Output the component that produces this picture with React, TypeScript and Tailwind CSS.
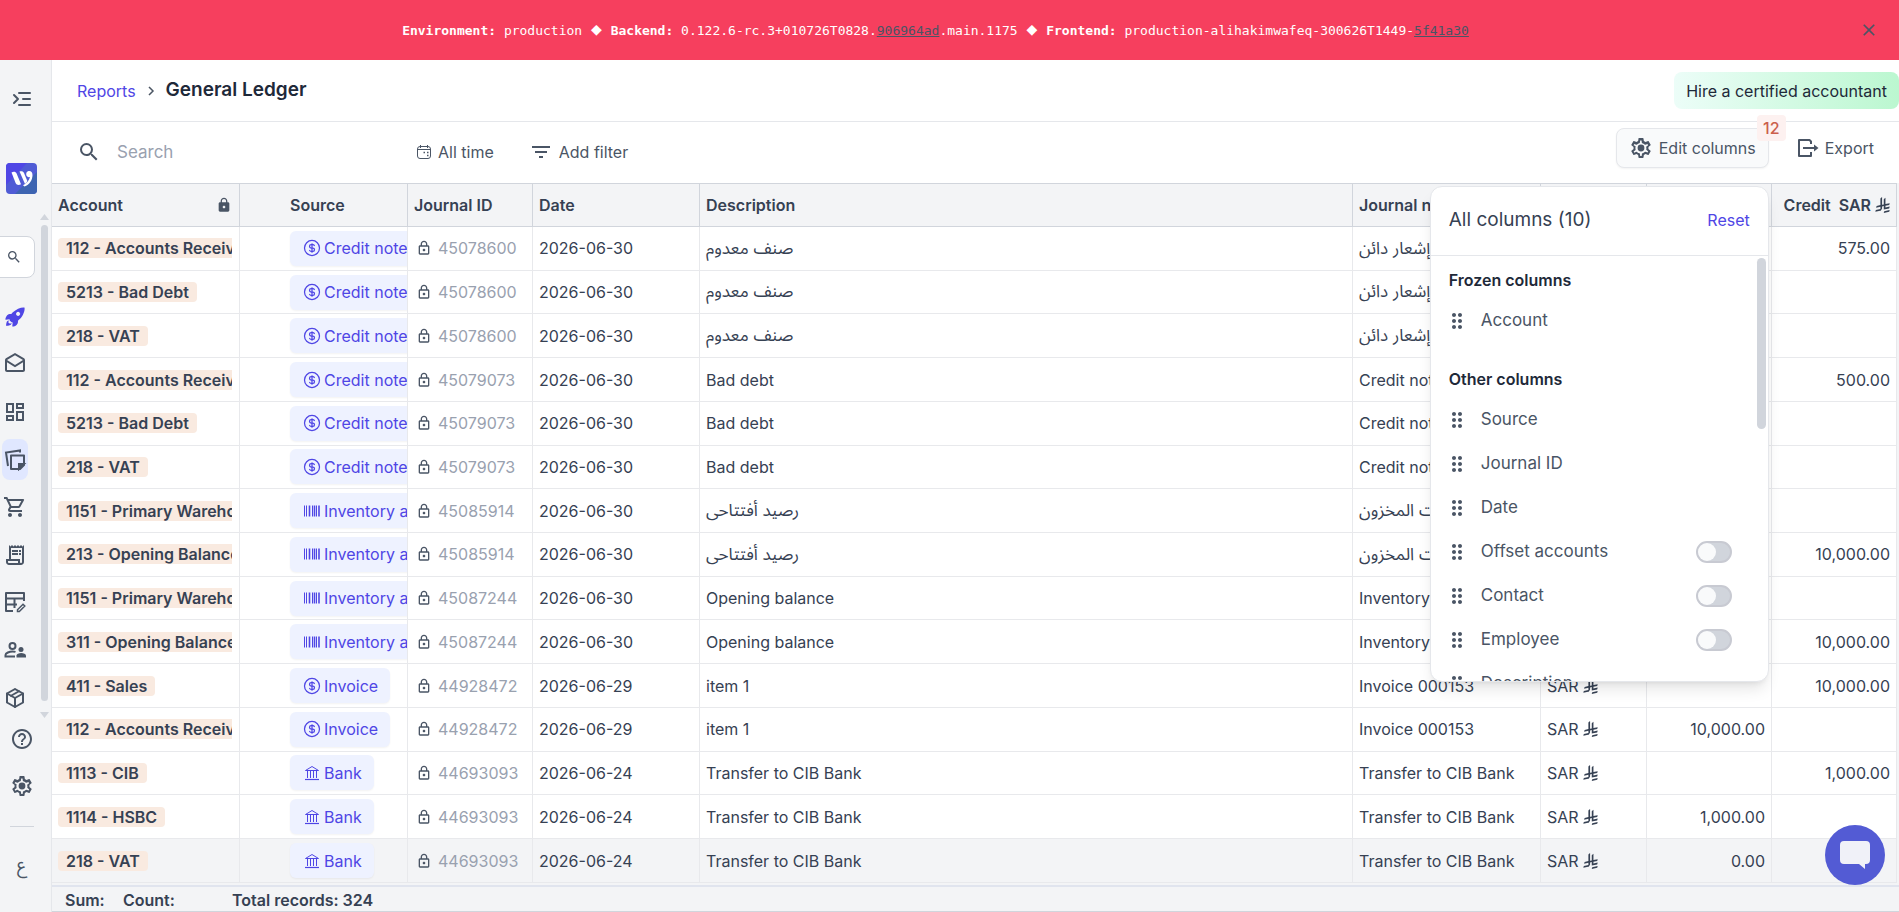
import React from 'react'
import {
  MdClose,
  MdDragIndicator,
  MdFilterList,
  MdHelpOutline,
  MdLock,
  MdOutlineDashboard,
  MdOutlineDrafts,
  MdOutlineLock,
  MdOutlineReceiptLong,
  MdOutlineShoppingCart,
  MdSearch,
} from 'react-icons/md'
import { IoRocketSharp } from 'react-icons/io5'
import { TbCoin, TbIndentIncrease, TbPackage } from 'react-icons/tb'

type SourceType = 'Credit note' | 'Inventory adjustment' | 'Invoice' | 'Bank'

interface Entry {
  account: string
  source: SourceType
  journalId: string
  date: string
  description: string
  note: string
  debit: string
  credit: string
}

const entries: Entry[] = [
  { account: '112 - Accounts Receivable', source: 'Credit note', journalId: '45078600', date: '2026-06-30', description: 'صنف معدوم', note: 'إشعار دائن', debit: '', credit: '575.00' },
  { account: '5213 - Bad Debt', source: 'Credit note', journalId: '45078600', date: '2026-06-30', description: 'صنف معدوم', note: 'إشعار دائن', debit: '500.00', credit: '' },
  { account: '218 - VAT', source: 'Credit note', journalId: '45078600', date: '2026-06-30', description: 'صنف معدوم', note: 'إشعار دائن', debit: '75.00', credit: '' },
  { account: '112 - Accounts Receivable', source: 'Credit note', journalId: '45079073', date: '2026-06-30', description: 'Bad debt', note: 'Credit note', debit: '', credit: '500.00' },
  { account: '5213 - Bad Debt', source: 'Credit note', journalId: '45079073', date: '2026-06-30', description: 'Bad debt', note: 'Credit note', debit: '500.00', credit: '' },
  { account: '218 - VAT', source: 'Credit note', journalId: '45079073', date: '2026-06-30', description: 'Bad debt', note: 'Credit note', debit: '0.00', credit: '' },
  { account: '1151 - Primary Warehouse', source: 'Inventory adjustment', journalId: '45085914', date: '2026-06-30', description: 'رصيد أفتتاحى', note: 'تعديلات المخزون', debit: '10,000.00', credit: '' },
  { account: '213 - Opening Balance', source: 'Inventory adjustment', journalId: '45085914', date: '2026-06-30', description: 'رصيد أفتتاحى', note: 'تعديلات المخزون', debit: '', credit: '10,000.00' },
  { account: '1151 - Primary Warehouse', source: 'Inventory adjustment', journalId: '45087244', date: '2026-06-30', description: 'Opening balance', note: 'Inventory', debit: '10,000.00', credit: '' },
  { account: '311 - Opening Balance', source: 'Inventory adjustment', journalId: '45087244', date: '2026-06-30', description: 'Opening balance', note: 'Inventory', debit: '', credit: '10,000.00' },
  { account: '411 - Sales', source: 'Invoice', journalId: '44928472', date: '2026-06-29', description: 'item 1', note: 'Invoice 000153', debit: '', credit: '10,000.00' },
  { account: '112 - Accounts Receivable', source: 'Invoice', journalId: '44928472', date: '2026-06-29', description: 'item 1', note: 'Invoice 000153', debit: '10,000.00', credit: '' },
  { account: '1113 - CIB', source: 'Bank', journalId: '44693093', date: '2026-06-24', description: 'Transfer to CIB Bank', note: 'Transfer to CIB Bank', debit: '', credit: '1,000.00' },
  { account: '1114 - HSBC', source: 'Bank', journalId: '44693093', date: '2026-06-24', description: 'Transfer to CIB Bank', note: 'Transfer to CIB Bank', debit: '1,000.00', credit: '' },
  { account: '218 - VAT', source: 'Bank', journalId: '44693093', date: '2026-06-24', description: 'Transfer to CIB Bank', note: 'Transfer to CIB Bank', debit: '0.00', credit: '' },
]

const otherColumns = [
  { name: 'Source', toggle: false },
  { name: 'Journal ID', toggle: false },
  { name: 'Date', toggle: false },
  { name: 'Offset accounts', toggle: true },
  { name: 'Contact', toggle: true },
  { name: 'Employee', toggle: true },
  { name: 'Description', toggle: false },
]

const Riyal = () => (
  <svg viewBox="0 0 1124 1257" className="inline-block h-4 w-[15px]" fill="currentColor" aria-hidden="true">
    <path d="M699.62 1113.02c-20.06 44.48-33.32 92.75-38.4 143.37l424.51-90.24c20.06-44.47 33.31-92.75 38.4-143.37l-424.51 90.24Z" />
    <path d="M1085.73 895.8c20.06-44.47 33.32-92.75 38.4-143.37l-330.68 70.33v-135.2l292.27-62.11c20.06-44.47 33.32-92.75 38.4-143.37l-330.68 70.27V66.13c-50.67 28.45-95.67 66.32-132.25 110.99v403.35l-132.25 28.11V0c-50.67 28.44-95.67 66.32-132.25 110.99v525.69l-295.91 62.88c-20.06 44.47-33.33 92.75-38.42 143.37l334.33-71.05v170.26l-358.3 76.14c-20.06 44.47-33.32 92.75-38.4 143.37l375.04-79.7c30.53-6.35 56.77-24.4 73.83-49.24l68.78-101.97c7.14-10.55 11.3-23.27 11.3-36.97v-149.98l132.25-28.11v270.4l424.53-90.28Z" />
  </svg>
)

const GearIcon = () => (
  <svg viewBox="0 0 24 24" className="size-6" fill="currentColor" aria-hidden="true">
    <path d="M19.43 12.98c.04-.32.07-.64.07-.98s-.03-.66-.07-.98l2.11-1.65c.19-.15.24-.42.12-.64l-2-3.46c-.12-.22-.39-.3-.61-.22l-2.49 1c-.52-.4-1.08-.73-1.69-.98l-.38-2.65A.49.49 0 0 0 14 2h-4c-.25 0-.46.18-.49.42l-.38 2.65c-.61.25-1.17.59-1.69.98l-2.49-1c-.23-.09-.49 0-.61.22l-2 3.46c-.13.22-.07.49.12.64l2.11 1.65c-.04.32-.07.65-.07.98s.03.66.07.98l-2.11 1.65c-.19.15-.24.42-.12.64l2 3.46c.12.22.39.3.61.22l2.49-1c.52.4 1.08.73 1.69.98l.38 2.65c.03.24.24.42.49.42h4c.25 0 .46-.18.49-.42l.38-2.65c.61-.25 1.17-.59 1.69-.98l2.49 1c.23.09.49 0 .61-.22l2-3.46c.12-.22.07-.49-.12-.64l-2.11-1.65Zm-2-.98c0 .22-.02.45-.05.74l-.14 1.13.89.7 1.08.84-.7 1.21-1.27-.51-1.04-.42-.9.68c-.43.32-.84.56-1.25.73l-1.06.43-.16 1.13-.2 1.35h-1.4l-.35-2.48-1.06-.43c-.43-.18-.83-.41-1.23-.71l-.91-.7-1.06.43-1.27.51-.7-1.21 1.97-1.54-.14-1.13c-.03-.3-.05-.54-.05-.75s.02-.45.05-.74l.14-1.13L4.57 9.14l.7-1.21 1.27.51 1.04.42.9-.68c.43-.32.84-.56 1.25-.73l1.06-.43.16-1.13.2-1.35h1.39l.35 2.48 1.06.43c.43.18.83.41 1.23.71l.91.7 1.06-.43 1.27-.51.7 1.21-1.96 1.55.14 1.13c.03.3.05.52.05.73Z" />
    <circle cx="12" cy="12" r="3.4" />
  </svg>
)

const NotesIcon = () => (
  <svg viewBox="0 0 24 24" className="size-6" fill="none" stroke="currentColor" strokeWidth="2" aria-hidden="true">
    <path d="M8 8.5h13V18l-4 4H8z" strokeLinejoin="round" />
    <path d="M21 17h-5v5z" fill="currentColor" />
    <path d="M5 19 3 5.500 17 3.500v2" />
  </svg>
)

const TableEditIcon = () => (
  <svg viewBox="0 0 24 24" className="size-6" fill="none" stroke="currentColor" strokeWidth="2" aria-hidden="true">
    <path d="M10 21H3V3h18v8" strokeLinejoin="round" />
    <path d="M3 8.500h18M3 14.500h11M11.500 8.500V18" />
    <path d="M14.500 21.500v-1.800l5.500-5.500 1.800 1.800-5.500 5.500z" strokeWidth="1.500" />
  </svg>
)

const PeopleIcon = () => (
  <svg viewBox="0 0 24 24" className="size-6" fill="none" stroke="currentColor" strokeWidth="2" aria-hidden="true">
    <circle cx="9.500" cy="8" r="3" />
    <path d="M12 18.500H2.500v-1.500c0-2 4-3.500 7-3.500 1 0 2 .1 3 .4" />
    <circle cx="18" cy="11.500" r="2.500" fill="currentColor" stroke="none" />
    <path d="M13.500 19.500v-2c0-1.500 2.500-2.500 4.700-2.500s4.800 1 4.800 2.500v2z" fill="currentColor" stroke="none" />
  </svg>
)

const CalendarIcon = () => (
  <svg viewBox="0 0 16 16" className="size-4" fill="none" stroke="currentColor" aria-hidden="true">
    <rect x="1.500" y="2.500" width="13" height="12" rx="2.500" />
    <path d="M1.500 5.500h13M4.500 1v3M11.500 1v3" />
    <path d="M7.500 8.500h1.500M11 8.500h1.500M11 11.500h1.500" strokeWidth="1.500" />
  </svg>
)

const ExportIcon = () => (
  <svg viewBox="0 0 22 20" className="h-5 w-[22px]" fill="none" stroke="currentColor" strokeWidth="2" aria-hidden="true">
    <path d="M14 6V3.500L12.500 2H2v16h12v-4" strokeLinejoin="round" />
    <path d="M6 10h13" />
    <path d="m17 6.500 4.500 3.500-4.500 3.500z" fill="currentColor" stroke="none" />
  </svg>
)

const BankIcon = () => (
  <svg viewBox="0 0 16 16" className="size-4" fill="none" stroke="currentColor" aria-hidden="true">
    <path d="M1.500 5.500h13L8 1.500z" strokeLinejoin="round" />
    <path d="M3.500 6v7M6.500 6v7M9.500 6v7M12.500 6v7" />
    <path d="M1 14.500h14" strokeWidth="1.200" />
  </svg>
)

const BarcodeIcon = () => (
  <svg viewBox="0 0 16 16" className="size-4 shrink-0" fill="none" stroke="currentColor" aria-hidden="true">
    <path d="M.5 2.500v11M2.500 2.500v11M8.500 2.500v11M12.500 2.500v11" />
    <path d="M5.500 2.500v11M10.500 2.500v11M15 2.500v11" strokeWidth="1.600" />
  </svg>
)

const Logo = () => (
  <svg viewBox="0 0 31 31" className="size-[31px]" aria-hidden="true">
    <rect width="31" height="31" rx="4" fill="#4f5bd5" />
    <path d="M0 4a4 4 0 0 1 4-4h17L0 22z" fill="#4f46e5" />
    <path d="M31 9v18a4 4 0 0 1-4 4H9z" fill="#3d64b1" />
    <g fill="#fff">
      <path d="M5.500 9.500c2-1.300 4.200-1 5.200 1.200l4.300 10.500c-2.300 1.300-4.500.8-5.500-1.500z" />
      <path d="M13.500 8.500c2-.8 3.700-.3 4.500 1.500l3.300 8c-.6 1.300-1.300 2.200-2.300 3z" />
      <path d="M22.500 8c2.400-.4 4 1.200 4 4 0 5-3 9.800-8 11.500l-1.500-1.300c3.500-1.700 6.200-4.700 7-8.200-2 .6-3.800-.8-3.800-2.800 0-1.700 1-2.900 2.300-3.200z" />
    </g>
  </svg>
)

const SourceIcon: React.FC<{ source: SourceType }> = ({ source }) => {
  if (source === 'Bank') return <BankIcon />
  if (source === 'Inventory adjustment') return <BarcodeIcon />
  return <TbCoin className="-mx-[2px] size-5 shrink-0" strokeWidth={1.5} />
}

const navItems = [
  { label: 'Get started', icon: <IoRocketSharp className="size-[22px] text-[#4f46e5]" /> },
  { label: 'Inbox', icon: <MdOutlineDrafts className="size-6" /> },
  { label: 'Dashboard', icon: <MdOutlineDashboard className="size-6" /> },
  { label: 'Reports', icon: <NotesIcon /> },
  { label: 'Sales', icon: <MdOutlineShoppingCart className="size-6" /> },
  { label: 'Bills', icon: <MdOutlineReceiptLong className="size-6" /> },
  { label: 'Accounting', icon: <TableEditIcon /> },
  { label: 'Payroll', icon: <PeopleIcon /> },
  { label: 'Inventory', icon: <TbPackage className="size-6" /> },
]

const Banner = () => (
  <div className="flex h-[60px] shrink-0 items-center bg-[#f63f5e] pl-8 text-white">
    <p className="flex-1 pt-[2px] text-center font-['DejaVu_Sans_Mono',monospace] text-[13px]">
      <b>Environment:</b> production <span className="mx-px text-lg leading-4">◆</span> <b>Backend:</b> 0.122.6-rc.3+010726T0828.
      <a href="#backend" className="text-gray-600 underline">906964ad</a>.main.1175{' '}
      <span className="mx-px text-lg leading-4">◆</span> <b>Frontend:</b> production-alihakimwafeq-300626T1449-
      <a href="#frontend" className="text-gray-600 underline">5f41a30</a>
    </p>
    <button aria-label="Close" className="flex w-[60px] justify-center text-gray-600">
      <MdClose className="size-5" />
    </button>
  </div>
)

const Sidebar = () => (
  <aside className="flex w-[52px] shrink-0 flex-col border-r border-gray-200 bg-gray-100 text-gray-600">
    <button aria-label="Expand menu" className="mt-7 flex h-[22px] items-center justify-center pr-2">
      <TbIndentIncrease className="size-6" />
    </button>
    <div className="mt-[53px] pl-[6px]">
      <Logo />
    </div>
    <div className="mt-5 flex h-[504px] justify-between">
      <div className="flex flex-col">
        <button aria-label="Search" className="-ml-2 mt-[22px] flex h-[42px] w-[43px] items-center justify-center rounded-lg border border-gray-300 bg-white">
          <MdSearch className="size-4" />
        </button>
        <nav className="mt-[18px] flex flex-1 flex-col justify-between pl-[2px]">
          {navItems.map((item) => (
            <a
              key={item.label}
              href="#nav"
              aria-label={item.label}
              className={
                item.label === 'Reports'
                  ? 'flex h-[41px] w-[26px] items-center justify-center rounded-lg bg-indigo-100'
                  : 'flex h-[41px] w-[26px] items-center justify-center'
              }
            >
              {item.icon}
            </a>
          ))}
        </nav>
      </div>
      <div className="mr-[2px] flex w-[9px] flex-col items-center">
        <span className="h-[6px] w-[9px] bg-gray-300 [clip-path:polygon(50%_0,100%_100%,0_100%)]" />
        <span className="mt-[5px] mb-[11px] w-[7px] flex-1 rounded-full bg-gray-300" />
        <span className="h-[6px] w-[9px] bg-gray-300 [clip-path:polygon(0_0,100%_0,50%_100%)]" />
      </div>
    </div>
    <div className="flex flex-col items-center pr-2">
      <button aria-label="Help" className="mt-[9px]">
        <MdHelpOutline className="size-6" />
      </button>
      <button aria-label="Settings" className="mt-[23px]">
        <GearIcon />
      </button>
      <hr className="mt-7 w-6 border-gray-300" />
      <button className="mt-[26px] text-lg leading-6">ع</button>
    </div>
  </aside>
)

const ColumnRow: React.FC<{ name: string; toggle: boolean }> = ({ name, toggle }) => (
  <li className="flex h-11 items-center text-[17px] text-gray-600">
    <MdDragIndicator className="mr-2 -ml-1 size-6" />
    <label htmlFor={'col-' + name} className="flex-1 pl-1">
      {name}
    </label>
    {toggle && (
      <input
        id={'col-' + name}
        type="checkbox"
        role="switch"
        className="mr-[34px] h-[22px] w-9 appearance-none rounded-full border-2 border-[#c8cad2] bg-gray-300 before:block before:size-[18px] before:rounded-full before:bg-gray-50"
      />
    )}
  </li>
)

const ColumnsPanel = () => (
  <div className="absolute top-[58px] right-0 z-20 h-[496px] w-[339px] overflow-hidden rounded-xl border border-gray-200 bg-white text-left shadow-lg">
    <div className="flex h-[69px] items-center justify-between border-b border-gray-200 px-[18px] pb-[2px]">
      <h2 className="text-[19px] text-gray-700">All columns (10)</h2>
      <button className="text-[#4f46e5]">Reset</button>
    </div>
    <div className="flex">
      <div className="flex-1 pt-3 pl-[18px]">
        <h3 className="font-semibold text-gray-800">Frozen columns</h3>
        <ul className="pt-[7px]">
          <ColumnRow name="Account" toggle={false} />
        </ul>
        <h3 className="pt-6 font-semibold text-gray-800">Other columns</h3>
        <ul className="pt-[7px]">
          {otherColumns.map((c) => (
            <ColumnRow key={c.name} name={c.name} toggle={c.toggle} />
          ))}
        </ul>
      </div>
      <span className="mt-[2px] mr-[2px] -ml-[9px] h-[171px] w-[9px] rounded-full bg-gray-300" />
    </div>
  </div>
)

const Toolbar = () => (
  <div className="flex h-[61px] shrink-0 items-start text-gray-600">
    <label className="mt-[18px] flex h-6 w-[364px] items-center gap-4 pl-[25px]">
      <MdSearch className="size-6" />
      <input type="text" placeholder="Search" aria-label="Search" className="w-60 pt-px text-[17px] outline-none placeholder:text-gray-400" />
    </label>
    <button className="mt-[18px] flex items-center gap-[6px]">
      <CalendarIcon /> All time
    </button>
    <button className="mt-[18px] ml-[35px] flex items-center gap-[6px]">
      <MdFilterList className="size-6" /> Add filter
    </button>
    <div className="relative mt-[6px] ml-auto">
      <button className="flex h-10 items-center gap-[6px] rounded-lg border border-gray-200 bg-gray-50 px-3 shadow-xs">
        <GearIcon /> Edit columns
      </button>
      <span className="absolute -top-[13px] -right-[17px] flex h-[26px] w-[29px] items-center justify-center rounded bg-[#fdf1f0] font-medium text-[#cb5f4c]">12</span>
      <ColumnsPanel />
    </div>
    <button className="mt-[14px] mr-[25px] ml-7 flex items-center gap-[6px]">
      <ExportIcon /> Export
    </button>
  </div>
)

const th = 'overflow-hidden border-y border-r border-gray-300 px-[6px] text-left font-semibold whitespace-nowrap'
const td = 'overflow-hidden border-r border-b border-[#e8e9ec] px-[6px] py-0 whitespace-nowrap'

const isArabic = (text: string) => /[\u0600-\u06ff]/.test(text)

const LedgerTable = () => (
  <table className="h-full w-full table-fixed border-separate border-spacing-0 text-gray-700">
    <colgroup>
      <col className="w-[188px]" />
      <col className="w-[168px]" />
      <col className="w-[125px]" />
      <col className="w-[167px]" />
      <col />
      <col className="w-[188px]" />
      <col className="w-[106px]" />
      <col className="w-[125px]" />
      <col className="w-[125px]" />
    </colgroup>
    <thead className="bg-gray-100">
      <tr className="h-11">
        <th className={th}>
          <span className="flex items-center justify-between pr-px">
            Account <MdLock className="size-4 text-gray-600" />
          </span>
        </th>
        <th className={th}>
          <span className="pl-11">Source</span>
        </th>
        <th className={th}>Journal ID</th>
        <th className={th}>Date</th>
        <th className={th}>Description</th>
        <th className={th}>Journal note</th>
        <th className={th}>Currency</th>
        <th className={th}>Debit</th>
        <th className={th}>
          <span className="flex items-center justify-end gap-2">
            Credit{' '}
            <span className="flex items-center gap-1">
              SAR <Riyal />
            </span>
          </span>
        </th>
      </tr>
    </thead>
    <tbody>
      {entries.map((e, i) => (
        <tr key={i} className={i === entries.length - 1 ? 'bg-gray-100' : 'bg-white'}>
          <td className={td}>
            <div className="mr-px flex overflow-hidden">
              <span className="rounded-sm bg-[#f9eae0] px-2 leading-5 font-semibold">{e.account}</span>
            </div>
          </td>
          <td className="overflow-hidden border-r border-b border-[#e8e9ec] py-0 pl-[50px] whitespace-nowrap">
            <button className="flex h-[35px] items-center gap-1 rounded-md bg-[#eef2ff] pr-3 pl-[14px] text-[#4f46e5] shadow-xs">
              <SourceIcon source={e.source} /> {e.source}
            </button>
          </td>
          <td className={td}>
            <span className="flex items-center gap-[6px] pl-[2px] text-gray-400">
              <MdOutlineLock className="size-4 text-gray-600" /> {e.journalId}
            </span>
          </td>
          <td className={td}>{e.date}</td>
          <td className={isArabic(e.description) ? td + ' text-[17px]' : td}>{e.description}</td>
          <td className={isArabic(e.note) ? td + ' text-[17px]' : td}>{e.note}</td>
          <td className={td}>
            <span className="flex items-center gap-1">
              SAR <Riyal />
            </span>
          </td>
          <td className={td + ' text-right'}>{e.debit}</td>
          <td className={td + ' text-right'}>{e.credit}</td>
        </tr>
      ))}
    </tbody>
  </table>
)

export default function App() {
  return (
    <div className="relative flex h-screen flex-col overflow-hidden bg-white font-['Inter','Noto_Sans_Arabic','Noto_Sans',sans-serif] text-base">
      <Banner />
      <div className="flex min-h-0 flex-1">
        <Sidebar />
        <main className="flex min-w-0 flex-1 flex-col">
          <header className="flex h-[62px] shrink-0 items-center justify-between border-b border-gray-200 pl-[25px]">
            <nav className="flex items-center gap-[11px]">
              <a href="#reports" className="text-[#4f46e5]">Reports</a>
              <svg viewBox="0 0 8 10" className="h-[10px] w-2" fill="none" stroke="#4b5563" strokeWidth="1.500" aria-hidden="true">
                <path d="m2 1 4 4-4 4" />
              </svg>
              <h1 className="text-[19px] font-semibold text-gray-800">General Ledger</h1>
            </nav>
            <button className="h-[37px] rounded-lg bg-linear-to-r from-[#ecfdf8] to-[#bbf7d0] px-3 text-gray-800">
              Hire a certified accountant
            </button>
          </header>
          <Toolbar />
          <div className="min-h-0 flex-1 bg-gray-100 pr-[2px] pb-[2px]">
            <LedgerTable />
          </div>
          <footer className="flex h-[27px] shrink-0 items-center border-t-2 border-b border-t-[#e0e4ee] border-b-gray-300 bg-gray-100 pt-px pl-[13px] font-semibold text-gray-700">
            <span className="w-[58px]">Sum:</span>
            <span className="w-[109px]">Count:</span>
            <span>Total records: 324</span>
          </footer>
        </main>
      </div>
      <button aria-label="Open chat" className="absolute right-[14px] bottom-[27px] z-30 flex size-[60px] items-center justify-center rounded-full bg-[#535bd4]">
        <svg viewBox="0 0 30 28" className="h-7 w-[30px]" fill="#f0f1f8" aria-hidden="true">
          <path d="M4 0h22a4 4 0 0 1 4 4v15a4 4 0 0 1-4 4h-1v5l-6-5H4a4 4 0 0 1-4-4V4a4 4 0 0 1 4-4z" />
        </svg>
      </button>
    </div>
  )
}
